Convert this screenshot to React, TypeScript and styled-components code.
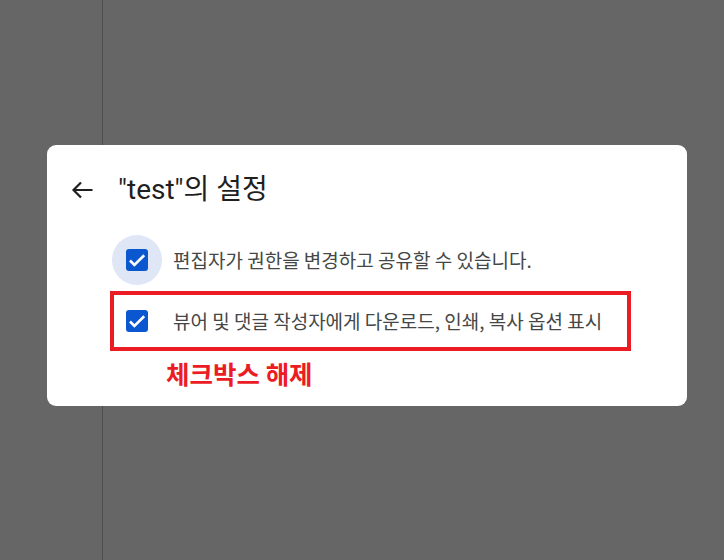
import styled, { createGlobalStyle } from "styled-components"

const GlobalStyle = createGlobalStyle`
  html, body {
    margin: 0;
    padding: 0;
    height: 100%;
  }
  body {
    background: #666666;
    font-family: Roboto, "Noto Sans CJK KR", "Noto Sans", sans-serif;
  }
  #root {
    height: 100%;
  }
`

export default function App() {
    return (
        <>
            <GlobalStyle />
            <Page>
                <SidePanel />
                <Overlay>
                    <Dialog>
                        <Header>
                            <BackButton aria-label="back">
                                <svg width="24" height="24" viewBox="0 0 24 24" fill="none">
                                    <path d="M22.5 12H3.5M11 4.5L3.5 12l7.5 7.5" stroke="#1f1f1f" strokeWidth="2.2" />
                                </svg>
                            </BackButton>
                            <Title>"test"의 설정</Title>
                        </Header>
                        <OptionList>
                            <OptionRow>
                                <CheckCell $halo>
                                    <CheckBox />
                                </CheckCell>
                                <Label>편집자가 권한을 변경하고 공유할 수 있습니다.</Label>
                            </OptionRow>
                            <OptionRow $highlight>
                                <CheckCell>
                                    <CheckBox />
                                </CheckCell>
                                <Label>뷰어 및 댓글 작성자에게 다운로드, 인쇄, 복사 옵션 표시</Label>
                            </OptionRow>
                        </OptionList>
                        <Note>체크박스 해제</Note>
                    </Dialog>
                </Overlay>
            </Page>
        </>
    )
}

function CheckBox() {
    return (
        <Box>
            <svg width="22" height="22" viewBox="0 0 22 22" fill="none">
                <path d="M4 11.5l4.4 4.4L18.2 6.3" stroke="#ffffff" strokeWidth="2.6" />
            </svg>
        </Box>
    )
}

const Page = styled.div`
    position: relative;
    height: 100%;
    display: flex;
`
const SidePanel = styled.aside`
    width: 102px;
    height: 100%;
    border-right: 1px solid #4d4d4d;
`
const Overlay = styled.div`
    position: absolute;
    inset: 0;
    padding: 145px 0 0 47px;
`
const Dialog = styled.section`
    width: 640px;
    box-sizing: border-box;
    background: #ffffff;
    border-radius: 9px;
    padding: 28px 0 18px;
    display: flex;
    flex-direction: column;
`
const Header = styled.div`
    display: flex;
    align-items: center;
    height: 32px;
    padding-left: 23px;
    gap: 24px;
`
const BackButton = styled.button`
    border: 0;
    padding: 0;
    background: none;
    width: 24px;
    height: 24px;
    display: flex;
    margin-top: 2px;
`
const Title = styled.h2`
    margin: 0;
    font-size: 28px;
    font-weight: 400;
    line-height: 32px;
    color: #1f1f1f;
    margin-top: 1px;
`
const OptionList = styled.div`
    margin-top: 25px;
    padding-left: 63px;
    display: flex;
    flex-direction: column;
    gap: 1px;
`
const OptionRow = styled.div<{ $highlight?: boolean }>`
    width: 521px;
    height: 60px;
    box-sizing: border-box;
    border: 4px solid ${p => (p.$highlight ? "#ec1c24" : "transparent")};
    display: flex;
    align-items: center;
    gap: 13px;
`
const CheckCell = styled.div<{ $halo?: boolean }>`
    position: relative;
    width: 46px;
    height: 46px;
    display: flex;
    align-items: center;
    justify-content: center;
    &::before {
        content: "";
        display: ${p => (p.$halo ? "block" : "none")};
        position: absolute;
        left: -2px;
        top: -2px;
        width: 50px;
        height: 50px;
        border-radius: 50%;
        background: #dfe6f6;
    }
`
const Box = styled.span`
    position: relative;
    width: 22px;
    height: 22px;
    border-radius: 3px;
    background: #0b57d0;
    display: flex;
`
const Label = styled.span`
    font-family: "Noto Sans CJK KR", sans-serif;
    font-size: 19px;
    color: #444746;
    margin-top: -1px;
`
const Note = styled.p`
    margin: 7px 0 0 119px;
    font-family: "Noto Sans CJK KR", sans-serif;
    font-size: 25.5px;
    font-weight: 700;
    line-height: 30px;
    color: #ec1c24;
`
